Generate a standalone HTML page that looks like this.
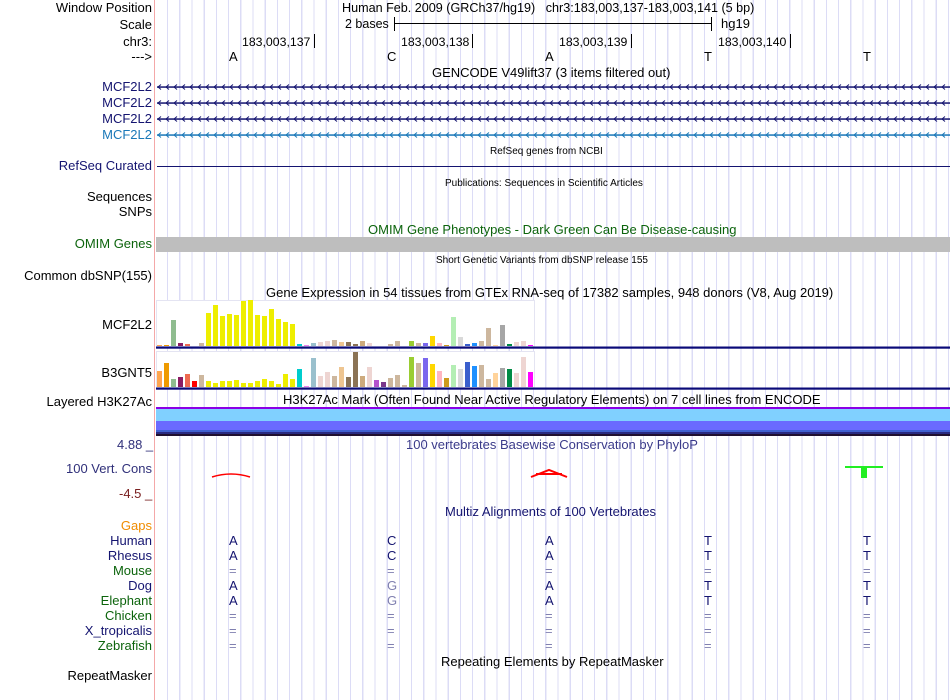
<!DOCTYPE html>
<html><head><meta charset="utf-8"><style>
body{margin:0;width:950px;height:700px;overflow:hidden;background:#fff;font-family:"Liberation Sans",Arial,sans-serif;font-size:13px;position:relative}
.t{position:absolute;white-space:nowrap;line-height:14px}
.l{position:absolute;right:798px;white-space:nowrap;line-height:14px;text-align:right}
.grid{position:absolute;left:156px;top:0;width:794px;height:700px;background:repeating-linear-gradient(90deg,transparent 0,transparent 11px,#dcdcf6 11px,#dcdcf6 12.2px)}
.nv{color:#141470}.gr{color:#0c640c}
.n{font-size:12.3px}
</style></head><body>
<div class="grid"></div>
<div style="position:absolute;left:154px;top:0;width:1px;height:700px;background:#f4a8a8"></div>

<div class="l" style="top:1px">Window Position</div>
<div class="l" style="top:18px">Scale</div>
<div class="l" style="top:35px">chr3:</div>
<div class="l" style="top:50px">---&gt;</div>
<div class="t" style="left:342px;top:1px;font-size:12.6px">Human Feb. 2009 (GRCh37/hg19)&nbsp;&nbsp;&nbsp;chr3:183,003,137-183,003,141 (5 bp)</div>
<div class="t" style="left:345px;top:17px;font-size:12.5px">2 bases</div>
<div style="position:absolute;left:394px;top:17px;width:1px;height:14px;background:#000"></div>
<div style="position:absolute;left:394px;top:23px;width:317px;height:1px;background:#000"></div>
<div style="position:absolute;left:711px;top:17px;width:1px;height:14px;background:#000"></div>
<div class="t" style="left:721px;top:17px">hg19</div>
<div class="t n" style="left:242px;top:35px">183,003,137</div><div style="position:absolute;left:314px;top:34px;width:1px;height:14px;background:#000"></div>
<div class="t n" style="left:401px;top:35px">183,003,138</div><div style="position:absolute;left:472px;top:34px;width:1px;height:14px;background:#000"></div>
<div class="t n" style="left:559px;top:35px">183,003,139</div><div style="position:absolute;left:631px;top:34px;width:1px;height:14px;background:#000"></div>
<div class="t n" style="left:718px;top:35px">183,003,140</div><div style="position:absolute;left:790px;top:34px;width:1px;height:14px;background:#000"></div>
<div class="t" style="left:229px;top:50px">A</div><div class="t" style="left:387px;top:50px">C</div><div class="t" style="left:545px;top:50px">A</div><div class="t" style="left:704px;top:50px">T</div><div class="t" style="left:863px;top:50px">T</div>
<div class="t" style="left:432px;top:66px">GENCODE V49lift37 (3 items filtered out)</div>

<div class="l nv" style="top:80px">MCF2L2</div>
<div class="l nv" style="top:96px">MCF2L2</div>
<div class="l nv" style="top:112px">MCF2L2</div>
<div class="l" style="top:128px;color:#1a78b8">MCF2L2</div>
<svg style="position:absolute;left:156px;top:83px" width="794" height="64">
<defs>
<pattern id="a" x="0" y="0" width="8" height="8" patternUnits="userSpaceOnUse"><path d="M5 1.5 L2 4 L5 6.5" fill="none" stroke="#141470" stroke-width="1"/></pattern>
<pattern id="b" x="0" y="0" width="8" height="8" patternUnits="userSpaceOnUse"><path d="M5 1.5 L2 4 L5 6.5" fill="none" stroke="#1a78b8" stroke-width="1"/></pattern>
</defs>
<rect x="1" y="3.3" width="793" height="1.5" fill="#141470"/><rect x="1" y="0" width="793" height="8" fill="url(#a)"/>
<rect x="1" y="19.3" width="793" height="1.5" fill="#141470"/><rect x="1" y="16" width="793" height="8" fill="url(#a)"/>
<rect x="1" y="35.3" width="793" height="1.5" fill="#141470"/><rect x="1" y="32" width="793" height="8" fill="url(#a)"/>
<rect x="1" y="51.3" width="793" height="1.5" fill="#1a78b8"/><rect x="1" y="48" width="793" height="8" fill="url(#b)"/>
</svg>
<div class="t" style="left:490px;top:145px;font-size:10px">RefSeq genes from NCBI</div>
<div class="l nv" style="top:159px">RefSeq Curated</div>
<div style="position:absolute;left:157px;top:166px;width:793px;height:1px;background:#141470"></div>
<div class="t" style="left:445px;top:177px;font-size:10px">Publications: Sequences in Scientific Articles</div>
<div class="l" style="top:190px">Sequences</div>
<div class="l" style="top:205px">SNPs</div>
<div class="t gr" style="left:368px;top:223px">OMIM Gene Phenotypes - Dark Green Can Be Disease-causing</div>
<div class="l gr" style="top:237px">OMIM Genes</div>
<div style="position:absolute;left:156px;top:237px;width:794px;height:15px;background:#bebebe"></div>
<div class="t" style="left:436px;top:254px;font-size:10px">Short Genetic Variants from dbSNP release 155</div>
<div class="l" style="top:269px">Common dbSNP(155)</div>
<div class="t" style="left:266px;top:286px">Gene Expression in 54 tissues from GTEx RNA-seq of 17382 samples, 948 donors (V8, Aug 2019)</div>
<div class="l" style="top:318px">MCF2L2</div>
<div class="l" style="top:366px">B3GNT5</div>

<svg style="position:absolute;left:0;top:0" width="950" height="700">
<rect x="156.5" y="300.5" width="378" height="46" fill="#fff" stroke="#e4e4f2"/>
<rect x="156.5" y="351.5" width="378" height="36" fill="#fff" stroke="#e4e4f2"/>
<g>
<rect x="157" y="345" width="5" height="1" fill="#FFA54F"/><rect x="164" y="345" width="5" height="1" fill="#EE9A00"/><rect x="171" y="320" width="5" height="26" fill="#8FBC8F"/><rect x="178" y="343" width="5" height="3" fill="#8B1C62"/><rect x="185" y="344" width="5" height="2" fill="#EE6A50"/><rect x="199" y="343" width="5" height="3" fill="#CDB79E"/>
<rect x="206" y="313" width="5" height="33" fill="#EEEE00"/><rect x="213" y="305" width="5" height="41" fill="#EEEE00"/><rect x="220" y="316" width="5" height="30" fill="#EEEE00"/><rect x="227" y="314" width="5" height="32" fill="#EEEE00"/><rect x="234" y="315" width="5" height="31" fill="#EEEE00"/><rect x="241" y="301" width="5" height="45" fill="#EEEE00"/><rect x="248" y="300" width="5" height="46" fill="#EEEE00"/><rect x="255" y="315" width="5" height="31" fill="#EEEE00"/><rect x="262" y="316" width="5" height="30" fill="#EEEE00"/><rect x="269" y="309" width="5" height="37" fill="#EEEE00"/><rect x="276" y="319" width="5" height="27" fill="#EEEE00"/><rect x="283" y="322" width="5" height="24" fill="#EEEE00"/><rect x="290" y="324" width="5" height="22" fill="#EEEE00"/>
<rect x="297" y="344" width="5" height="2" fill="#00CDCD"/><rect x="304" y="345" width="5" height="1" fill="#EE82EE"/><rect x="311" y="343" width="5" height="3" fill="#9AC0CD"/><rect x="318" y="342" width="5" height="4" fill="#EED5D2"/><rect x="325" y="341" width="5" height="5" fill="#EED5D2"/><rect x="332" y="340" width="5" height="6" fill="#CDB79E"/><rect x="339" y="342" width="5" height="4" fill="#EEC591"/><rect x="346" y="342" width="5" height="4" fill="#8B7355"/><rect x="353" y="344" width="5" height="2" fill="#8B7355"/><rect x="360" y="341" width="5" height="5" fill="#CDAA7D"/><rect x="367" y="343" width="5" height="3" fill="#EED5D2"/>
<rect x="388" y="344" width="5" height="2" fill="#CDB79E"/><rect x="395" y="341" width="5" height="5" fill="#CDB79E"/><rect x="409" y="341" width="5" height="5" fill="#9ACD32"/><rect x="416" y="343" width="5" height="3" fill="#CDB79E"/><rect x="423" y="343" width="5" height="3" fill="#7A67EE"/><rect x="430" y="336" width="5" height="10" fill="#FFD700"/><rect x="437" y="343" width="5" height="3" fill="#FFB6C1"/><rect x="444" y="345" width="5" height="1" fill="#CD9B1D"/><rect x="451" y="317" width="5" height="29" fill="#B4EEB4"/><rect x="458" y="337" width="5" height="9" fill="#D9D9D9"/><rect x="465" y="344" width="5" height="2" fill="#3A5FCD"/><rect x="472" y="343" width="5" height="3" fill="#1E90FF"/><rect x="479" y="341" width="5" height="5" fill="#CDB79E"/><rect x="486" y="328" width="5" height="18" fill="#CDB79E"/><rect x="493" y="345" width="5" height="1" fill="#FFD39B"/><rect x="500" y="325" width="5" height="21" fill="#A6A6A6"/><rect x="507" y="344" width="5" height="2" fill="#008B45"/><rect x="514" y="342" width="5" height="4" fill="#EED5D2"/><rect x="521" y="341" width="5" height="5" fill="#EED5D2"/><rect x="528" y="345" width="5" height="1" fill="#FF00FF"/>
</g>
<g>
<rect x="157" y="371" width="5" height="16" fill="#FFA54F"/><rect x="164" y="363" width="5" height="24" fill="#EE9A00"/><rect x="171" y="379" width="5" height="8" fill="#8FBC8F"/><rect x="178" y="377" width="5" height="10" fill="#8B1C62"/><rect x="185" y="374" width="5" height="13" fill="#EE6A50"/><rect x="192" y="381" width="5" height="6" fill="#FF0000"/><rect x="199" y="375" width="5" height="12" fill="#CDB79E"/>
<rect x="206" y="381" width="5" height="6" fill="#EEEE00"/><rect x="213" y="383" width="5" height="4" fill="#EEEE00"/><rect x="220" y="381" width="5" height="6" fill="#EEEE00"/><rect x="227" y="381" width="5" height="6" fill="#EEEE00"/><rect x="234" y="380" width="5" height="7" fill="#EEEE00"/><rect x="241" y="383" width="5" height="4" fill="#EEEE00"/><rect x="248" y="383" width="5" height="4" fill="#EEEE00"/><rect x="255" y="381" width="5" height="6" fill="#EEEE00"/><rect x="262" y="379" width="5" height="8" fill="#EEEE00"/><rect x="269" y="381" width="5" height="6" fill="#EEEE00"/><rect x="276" y="384" width="5" height="3" fill="#EEEE00"/><rect x="283" y="374" width="5" height="13" fill="#EEEE00"/><rect x="290" y="379" width="5" height="8" fill="#EEEE00"/>
<rect x="297" y="369" width="5" height="18" fill="#00CDCD"/><rect x="304" y="386" width="5" height="1" fill="#EE82EE"/><rect x="311" y="358" width="5" height="29" fill="#9AC0CD"/><rect x="318" y="376" width="5" height="11" fill="#EED5D2"/><rect x="325" y="372" width="5" height="15" fill="#EED5D2"/><rect x="332" y="376" width="5" height="11" fill="#CDB79E"/><rect x="339" y="367" width="5" height="20" fill="#EEC591"/><rect x="346" y="377" width="5" height="10" fill="#8B7355"/><rect x="353" y="352" width="5" height="35" fill="#8B7355"/><rect x="360" y="376" width="5" height="11" fill="#CDAA7D"/><rect x="367" y="367" width="5" height="20" fill="#EED5D2"/><rect x="374" y="380" width="5" height="7" fill="#B452CD"/><rect x="381" y="382" width="5" height="5" fill="#7A378B"/><rect x="388" y="378" width="5" height="9" fill="#CDB79E"/><rect x="395" y="375" width="5" height="12" fill="#CDB79E"/><rect x="402" y="385" width="5" height="2" fill="#CDB79E"/><rect x="409" y="357" width="5" height="30" fill="#9ACD32"/><rect x="416" y="363" width="5" height="24" fill="#CDB79E"/><rect x="423" y="358" width="5" height="29" fill="#7A67EE"/><rect x="430" y="364" width="5" height="23" fill="#FFD700"/><rect x="437" y="371" width="5" height="16" fill="#FFB6C1"/><rect x="444" y="378" width="5" height="9" fill="#CD9B1D"/><rect x="451" y="365" width="5" height="22" fill="#B4EEB4"/><rect x="458" y="369" width="5" height="18" fill="#D9D9D9"/><rect x="465" y="362" width="5" height="25" fill="#3A5FCD"/><rect x="472" y="366" width="5" height="21" fill="#1E90FF"/><rect x="479" y="365" width="5" height="22" fill="#CDB79E"/><rect x="486" y="379" width="5" height="8" fill="#CDB79E"/><rect x="493" y="373" width="5" height="14" fill="#FFD39B"/><rect x="500" y="368" width="5" height="19" fill="#A6A6A6"/><rect x="507" y="369" width="5" height="18" fill="#008B45"/><rect x="514" y="373" width="5" height="14" fill="#EED5D2"/><rect x="521" y="357" width="5" height="30" fill="#EED5D2"/><rect x="528" y="372" width="5" height="15" fill="#FF00FF"/>
</g>
<rect x="156" y="346.5" width="794" height="2.2" fill="#0a0a78"/>
<rect x="156" y="387.5" width="794" height="2.2" fill="#0a0a78"/>
<rect x="156" y="407" width="794" height="2" fill="#8a00e6"/>
<rect x="156" y="409" width="794" height="12" fill="#80d0ff"/>
<rect x="156" y="421" width="794" height="9" fill="#6a6aff"/>
<rect x="156" y="430" width="794" height="2" fill="#4060d0"/>
<rect x="156" y="432" width="794" height="2" fill="#2a2a80"/>
<rect x="156" y="434" width="794" height="2" fill="#201030"/>
<path d="M212 477 Q231 471 250 477" fill="none" stroke="#f00" stroke-width="1.5"/>
<path d="M531 477 L549 470 L567 477 M536 474 L562 474" fill="none" stroke="#f00" stroke-width="2"/>
<rect x="845" y="466" width="38" height="2" fill="#22ee22"/>
<rect x="861" y="466" width="6" height="12" fill="#22ee22"/>
</svg>
<div class="l" style="top:395px">Layered H3K27Ac</div>
<div class="t" style="left:283px;top:393px">H3K27Ac Mark (Often Found Near Active Regulatory Elements) on 7 cell lines from ENCODE</div>
<div class="t" style="left:117px;top:438px;color:#30307a">4.88 _</div>
<div class="t" style="left:406px;top:438px;color:#3a3a8a">100 vertebrates Basewise Conservation by PhyloP</div>
<div class="l" style="top:462px;color:#30307a">100 Vert. Cons</div>
<div class="t" style="left:119px;top:487px;color:#7a2020">-4.5 _</div>
<div class="t" style="left:445px;top:505px;color:#141470">Multiz Alignments of 100 Vertebrates</div>
<div class="l" style="top:519px;color:#f08c00">Gaps</div>
<div class="l nv" style="top:534px">Human</div>
<div class="l nv" style="top:549px">Rhesus</div>
<div class="l gr" style="top:564px">Mouse</div>
<div class="l nv" style="top:579px">Dog</div>
<div class="l gr" style="top:594px">Elephant</div>
<div class="l gr" style="top:609px">Chicken</div>
<div class="l nv" style="top:624px">X_tropicalis</div>
<div class="l gr" style="top:639px">Zebrafish</div>
<div class="l" style="top:669px">RepeatMasker</div>
<div class="t" style="left:441px;top:655px">Repeating Elements by RepeatMasker</div>

<div class="t nv" style="left:229px;top:534px">A</div><div class="t nv" style="left:387px;top:534px">C</div><div class="t nv" style="left:545px;top:534px">A</div><div class="t nv" style="left:704px;top:534px">T</div><div class="t nv" style="left:863px;top:534px">T</div>
<div class="t nv" style="left:229px;top:549px">A</div><div class="t nv" style="left:387px;top:549px">C</div><div class="t nv" style="left:545px;top:549px">A</div><div class="t nv" style="left:704px;top:549px">T</div><div class="t nv" style="left:863px;top:549px">T</div>
<div class="t" style="left:229px;top:564px;color:#8080b0">=</div><div class="t" style="left:387px;top:564px;color:#8080b0">=</div><div class="t" style="left:545px;top:564px;color:#8080b0">=</div><div class="t" style="left:704px;top:564px;color:#8080b0">=</div><div class="t" style="left:863px;top:564px;color:#8080b0">=</div>
<div class="t nv" style="left:229px;top:579px">A</div><div class="t" style="left:387px;top:579px;color:#8080b0">G</div><div class="t nv" style="left:545px;top:579px">A</div><div class="t nv" style="left:704px;top:579px">T</div><div class="t nv" style="left:863px;top:579px">T</div>
<div class="t nv" style="left:229px;top:594px">A</div><div class="t" style="left:387px;top:594px;color:#8080b0">G</div><div class="t nv" style="left:545px;top:594px">A</div><div class="t nv" style="left:704px;top:594px">T</div><div class="t nv" style="left:863px;top:594px">T</div>
<div class="t" style="left:229px;top:609px;color:#8080b0">=</div><div class="t" style="left:387px;top:609px;color:#8080b0">=</div><div class="t" style="left:545px;top:609px;color:#8080b0">=</div><div class="t" style="left:704px;top:609px;color:#8080b0">=</div><div class="t" style="left:863px;top:609px;color:#8080b0">=</div>
<div class="t" style="left:229px;top:624px;color:#8080b0">=</div><div class="t" style="left:387px;top:624px;color:#8080b0">=</div><div class="t" style="left:545px;top:624px;color:#8080b0">=</div><div class="t" style="left:704px;top:624px;color:#8080b0">=</div><div class="t" style="left:863px;top:624px;color:#8080b0">=</div>
<div class="t" style="left:229px;top:639px;color:#8080b0">=</div><div class="t" style="left:387px;top:639px;color:#8080b0">=</div><div class="t" style="left:545px;top:639px;color:#8080b0">=</div><div class="t" style="left:704px;top:639px;color:#8080b0">=</div><div class="t" style="left:863px;top:639px;color:#8080b0">=</div>
</body></html>
